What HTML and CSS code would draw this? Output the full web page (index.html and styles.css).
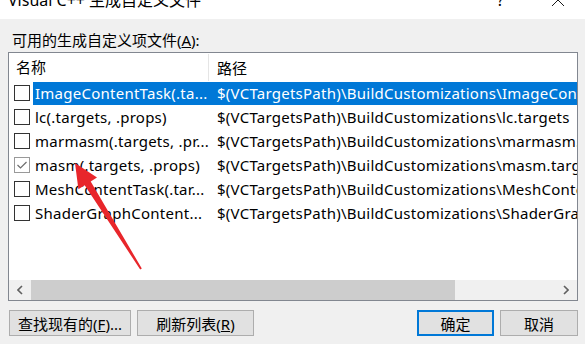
FILE: index.html
```html
<!DOCTYPE html>
<html lang="zh-CN">
<head>
  <meta charset="UTF-8">
  <title>Visual C++ 生成自定义文件</title>
  <link rel="stylesheet" href="styles.css">
</head>
<body>

  <div class="titlebar">
    <span class="title">Visual C++ 生成自定义文件</span>
    <span class="help">?</span>
    <svg class="close" width="14" height="8" viewBox="0 0 14 8">
      <path d="M1 -6 L13 6 M13 -6 L1 6" stroke="#1a1a1a" stroke-width="1" fill="none"/>
    </svg>
  </div>

  <div class="dialog">
    <div class="caption">可用的生成自定义项文件(<u>A</u>):</div>

    <div class="listbox">
      <div class="header">
        <div class="col-name">名称</div>
        <div class="col-path">路径</div>
      </div>

      <div class="rows">
        <div class="row selected">
          <span class="check"></span>
          <div class="cell-name">ImageContentTask(.ta...</div>
          <div class="cell-path">$(VCTargetsPath)\BuildCustomizations\ImageContentTask.targets</div>
        </div>
        <div class="row">
          <span class="check"></span>
          <div class="cell-name">lc(.targets, .props)</div>
          <div class="cell-path">$(VCTargetsPath)\BuildCustomizations\lc.targets</div>
        </div>
        <div class="row">
          <span class="check"></span>
          <div class="cell-name">marmasm(.targets, .pr...</div>
          <div class="cell-path">$(VCTargetsPath)\BuildCustomizations\marmasm.targets</div>
        </div>
        <div class="row">
          <span class="check checked">
            <svg width="14" height="14" viewBox="0 0 14 14">
              <path d="M2.5 7 L5.5 10 L11.5 4" stroke="#6d6d6d" stroke-width="1.2" fill="none"/>
            </svg>
          </span>
          <div class="cell-name">masm(.targets, .props)</div>
          <div class="cell-path">$(VCTargetsPath)\BuildCustomizations\masm.targets</div>
        </div>
        <div class="row">
          <span class="check"></span>
          <div class="cell-name">MeshContentTask(.tar...</div>
          <div class="cell-path">$(VCTargetsPath)\BuildCustomizations\MeshContentTask.targets</div>
        </div>
        <div class="row">
          <span class="check"></span>
          <div class="cell-name">ShaderGraphContent...</div>
          <div class="cell-path">$(VCTargetsPath)\BuildCustomizations\ShaderGraphContentTask.targets</div>
        </div>
      </div>

      <div class="hscroll">
        <div class="arrow">
          <svg width="6" height="10" viewBox="0 0 6 10"><path d="M5 1 L1 5 L5 9" stroke="#606060" stroke-width="1.6" fill="none"/></svg>
        </div>
        <div class="thumb"></div>
        <div class="track"></div>
        <div class="arrow">
          <svg width="6" height="10" viewBox="0 0 6 10"><path d="M1 1 L5 5 L1 9" stroke="#606060" stroke-width="1.6" fill="none"/></svg>
        </div>
      </div>
    </div>

    <div class="buttons">
      <button class="btn btn-find">查找现有的(<u>F</u>)...</button>
      <button class="btn btn-refresh">刷新列表(<u>R</u>)</button>
      <span class="spacer"></span>
      <button class="btn btn-ok default">确定</button>
      <button class="btn btn-cancel">取消</button>
    </div>
  </div>

  <!-- red annotation arrow drawn over the dialog -->
  <svg class="annotation" width="585" height="344" viewBox="0 0 585 344">
    <polygon points="75,163 97,177.6 90.7,181.5 141.8,268.5 140.2,269.5 84.7,185.2 78.4,189.2" fill="#e8262b"/>
  </svg>

</body>
</html>
```

FILE: styles.css
```css
body {
  margin: 0;
  width: 585px;
  height: 344px;
  overflow: hidden;
  background: #f0f0f0;
  font-family: "Noto Sans", "Noto Sans CJK SC", sans-serif;
  font-size: 15px;
  color: #000;
  position: relative;
}

.titlebar {
  height: 19px;
  background: #fff;
  display: flex;
  overflow: hidden;
}

.title {
  margin-top: -8px;
  padding-left: 8px;
  line-height: 16px;
  font-size: 16px;
  white-space: nowrap;
}

.help {
  margin-left: auto;
  margin-top: -8px;
  line-height: 16px;
  font-size: 16px;
}

.close {
  margin-left: 47px;
  margin-right: 20px;
}

.dialog {
  padding: 11px 7px 0 8px;
}

.caption {
  line-height: 20px;
  padding-left: 4px;
  margin-bottom: 2px;
}

.listbox {
  width: 568px;
  height: 247px;
  border: 1px solid #828790;
  background: #fff;
  display: flex;
  flex-direction: column;
}

.header {
  height: 28px;
  display: flex;
  align-items: center;
  flex-shrink: 0;
}

.col-name {
  width: 200px;
  padding-left: 7px;
  box-sizing: border-box;
  border-right: 1px solid #e5e5e5;
  height: 27px;
  line-height: 27px;
}

.col-path {
  padding-left: 8px;
}

.rows {
  flex: 1;
}

.row {
  height: 24px;
  display: flex;
  align-items: center;
  white-space: nowrap;
  overflow: hidden;
  letter-spacing: 0.25px;
}

.check {
  width: 14px;
  height: 14px;
  border: 1px solid #333;
  margin-left: 5px;
  margin-right: 3px;
  flex-shrink: 0;
  display: flex;
}

.check.checked {
  border-color: #999;
}

.cell-name {
  width: 176px;
  box-sizing: border-box;
  flex-shrink: 0;
  padding-left: 2px;
  line-height: 23px;
  overflow: hidden;
}

.cell-path {
  padding-left: 8px;
  line-height: 23px;
}

.row.selected .cell-name,
.row.selected .cell-path {
  background: #0078d7;
  color: #fff;
}

.row.selected .cell-path {
  flex: 1;
}

.hscroll {
  height: 20px;
  display: flex;
  background: #f0f0f0;
  flex-shrink: 0;
}

.arrow {
  width: 22px;
  display: flex;
  align-items: center;
  justify-content: center;
}

.thumb {
  width: 424px;
  background: #cdcdcd;
}

.track {
  flex: 1;
}

.buttons {
  display: flex;
  gap: 6px;
  margin-top: 9px;
  padding-left: 1px;
}

.spacer {
  flex: 1;
}

.btn {
  height: 26px;
  padding: 0;
  font-family: inherit;
  font-size: 15px;
  background: #e1e1e1;
  border: 1px solid #adadad;
  color: #000;
}

.btn-find {
  width: 122px;
}

.btn-refresh {
  width: 117px;
}

.btn-ok {
  width: 77px;
}

.btn-cancel {
  width: 78px;
}

.btn.default {
  border: 2px solid #0078d7;
}

.annotation {
  position: absolute;
  left: 0;
  top: 0;
}
```
